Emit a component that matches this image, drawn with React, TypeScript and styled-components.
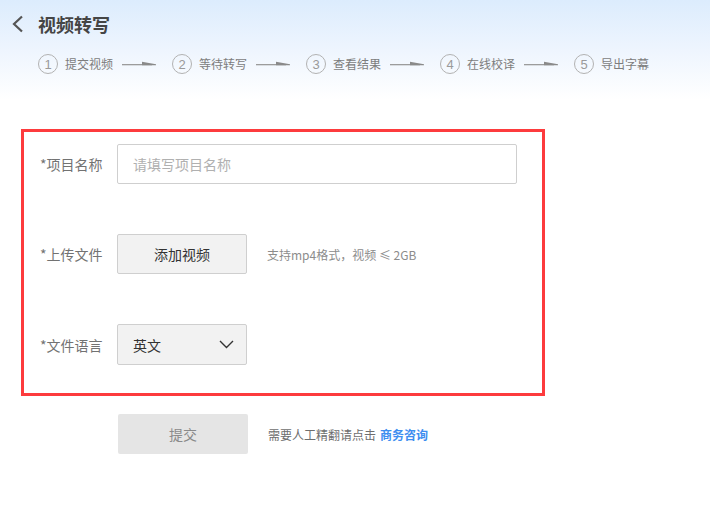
import React, { useState } from 'react';
import styled, { createGlobalStyle } from 'styled-components';

const GlobalStyle = createGlobalStyle`
  html, body {
    margin: 0;
    padding: 0;
    background: #fff;
    font-family: "Noto Sans CJK SC", "Noto Sans", sans-serif;
  }
`;

const Page = styled.div`
  width: 710px;
  min-height: 507px;
  background: #fff;
`;

const Header = styled.div`
  height: 100px;
  padding: 12px 0 0 12px;
  box-sizing: border-box;
  background: linear-gradient(180deg, #dcecfd 0%, #eef5fe 50%, #ffffff 100%);
`;

const TitleRow = styled.div`
  display: flex;
  align-items: center;
  height: 24px;
  gap: 14px;
`;

const BackButton = styled.button`
  border: none;
  background: none;
  padding: 0;
  width: 12px;
  height: 20px;
  display: flex;
  align-items: center;
  cursor: pointer;
`;

const Title = styled.h1`
  margin: 0;
  font-size: 18px;
  font-weight: 700;
  color: #454545;
  line-height: 24px;
`;

const Steps = styled.div`
  display: flex;
  align-items: center;
  margin: 18px 0 0 26px;
  height: 20px;
`;

const Step = styled.div`
  display: flex;
  align-items: center;
`;

const Circle = styled.span`
  width: 18px;
  height: 18px;
  border: 1px solid #b2b2b2;
  border-radius: 50%;
  display: flex;
  align-items: center;
  justify-content: center;
  font-size: 13px;
  color: #9a9a9a;
  font-family: "Liberation Sans", sans-serif;
  line-height: 1;
`;

const StepText = styled.span`
  margin-left: 7px;
  font-size: 12px;
  color: #7d7d7d;
  line-height: 20px;
`;

const Arrow = styled.svg`
  margin: 0 16px 0 9px;
`;

const FormBox = styled.div`
  margin: 29px 0 0 21px;
  width: 524px;
  box-sizing: border-box;
  border: 3px solid #fd3b3d;
  padding: 12px 0 28px 16px;
  display: flex;
  flex-direction: column;
  gap: 50px;
`;

const Row = styled.div`
  display: flex;
  align-items: center;
`;

const Label = styled.label`
  width: 77px;
  font-size: 14px;
  color: #727272;
  line-height: 20px;
`;

const TextInput = styled.input`
  width: 400px;
  height: 40px;
  box-sizing: border-box;
  border: 1px solid #cfcfcf;
  border-radius: 2px;
  padding: 0 15px;
  font-size: 14px;
  font-family: inherit;
  color: #333;
  outline: none;
  &::placeholder {
    color: #b0b0b0;
  }
`;

const GrayButton = styled.button`
  width: 130px;
  height: 40px;
  box-sizing: border-box;
  border: 1px solid #cfcfcf;
  border-radius: 2px;
  background: #f2f2f2;
  font-size: 14px;
  font-family: inherit;
  color: #333;
  cursor: pointer;
`;

const SelectBox = styled.div`
  width: 130px;
  height: 41px;
  box-sizing: border-box;
  border: 1px solid #cfcfcf;
  border-radius: 2px;
  background: #f2f2f2;
  display: flex;
  align-items: center;
  justify-content: space-between;
  padding: 0 12px 0 15px;
  font-size: 14px;
  color: #333;
  cursor: pointer;
`;

const Hint = styled.span`
  margin-left: 20px;
  font-size: 12px;
  color: #8c8c8c;
`;

const SubmitRow = styled.div`
  display: flex;
  align-items: center;
  margin: 18px 0 0 118px;
`;

const SubmitButton = styled.button`
  width: 130px;
  height: 40px;
  border: none;
  border-radius: 2px;
  background: #e5e5e5;
  font-size: 14px;
  font-family: inherit;
  color: #8a8a8a;
  cursor: not-allowed;
`;

const Note = styled.span`
  margin-left: 20px;
  font-size: 12px;
  color: #6e6e6e;
`;

const Link = styled.a`
  margin-left: 4px;
  color: #3d8ef0;
  font-weight: 700;
  text-decoration: none;
  cursor: pointer;
`;

const steps = ['提交视频', '等待转写', '查看结果', '在线校译', '导出字幕'];

const App: React.FC = () => {
    const [name, setName] = useState('');

    return (
        <Page>
            <GlobalStyle />
            <Header>
                <TitleRow>
                    <BackButton aria-label="back">
                        <svg width="12" height="18" viewBox="0 0 12 18">
                            <polyline points="10,1.5 2,9 10,16.5" fill="none" stroke="#555" strokeWidth="2.2" />
                        </svg>
                    </BackButton>
                    <Title>视频转写</Title>
                </TitleRow>
                <Steps>
                    {steps.map((s, i) => (
                        <Step key={s}>
                            <Circle>{i + 1}</Circle>
                            <StepText>{s}</StepText>
                            {i < steps.length - 1 && (
                                <Arrow width="34" height="8" viewBox="0 0 34 8">
                                    <rect x="0" y="4" width="30" height="1.3" fill="#9c9c9c" />
                                    <polygon points="20,1.8 34,4.2 34,5.3 20,5.3" fill="#8a8a8a" />
                                </Arrow>
                            )}
                        </Step>
                    ))}
                </Steps>
            </Header>

            <FormBox>
                <Row>
                    <Label htmlFor="project">*项目名称</Label>
                    <TextInput
                        id="project"
                        placeholder="请填写项目名称"
                        value={name}
                        onChange={(e) => setName(e.target.value)}
                    />
                </Row>
                <Row>
                    <Label>*上传文件</Label>
                    <GrayButton>添加视频</GrayButton>
                    <Hint>支持mp4格式，视频 ≤ 2GB</Hint>
                </Row>
                <Row>
                    <Label>*文件语言</Label>
                    <SelectBox>
                        <span>英文</span>
                        <svg width="15" height="9" viewBox="0 0 15 9">
                            <polyline points="1,1 7.5,7.5 14,1" fill="none" stroke="#333" strokeWidth="1.4" />
                        </svg>
                    </SelectBox>
                </Row>
            </FormBox>

            <SubmitRow>
                <SubmitButton disabled>提交</SubmitButton>
                <Note>
                    需要人工精翻请点击<Link>商务咨询</Link>
                </Note>
            </SubmitRow>
        </Page>
    );
};

export default App;
